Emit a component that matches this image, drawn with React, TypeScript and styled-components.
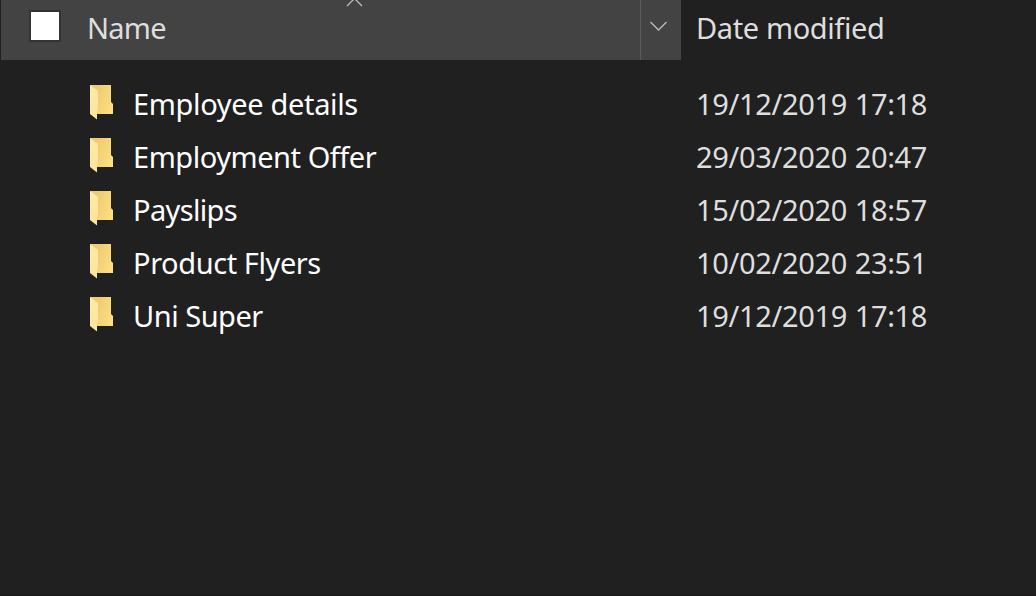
import React from 'react';
import styled, { createGlobalStyle } from 'styled-components';

const GlobalStyle = createGlobalStyle`
  * { box-sizing: border-box; }
  body {
    margin: 0;
    background: #202020;
    overflow: hidden;
  }
`;

const Explorer = styled.main`
  height: 596px;
  background: #202020;
  border-bottom: 1px solid #1a1719;
  font-family: 'Noto Sans', 'Open Sans', sans-serif;
  font-size: 29px;
  line-height: 40px;
  color: #dedede;
`;

const Header = styled.header`
  display: flex;
  height: 60px;
  padding-left: 1px;
`;

const NameColumn = styled.div`
  position: relative;
  display: flex;
  width: 639px;
  padding: 8px 0 0 29px;
  background: #434343;
`;

const Checkbox = styled.span`
  width: 32px;
  height: 32px;
  margin: 2px 26px 0 -1px;
  border: 2px solid #333333;
  background: #ffffff;
`;

const SortArrow = styled.svg`
  position: absolute;
  top: 0;
  left: 345px;
`;

const FilterButton = styled.div`
  display: flex;
  align-items: flex-start;
  width: 41px;
  padding: 20px 0 0 8px;
  border-left: 1px solid #5c5c5c;
  background: #434343;
`;

const DateColumn = styled.div`
  padding: 8px 0 0 15px;
`;

const Label = styled.span<{ $spacing: number }>`
  letter-spacing: ${({ $spacing }) => $spacing}px;
  white-space: pre;
`;

const List = styled.section`
  padding-top: 18px;
`;

const Row = styled.div`
  display: grid;
  grid-template-columns: 44px 563px auto;
  height: 53px;
  padding: 6px 0 0 89px;
`;

const FileName = styled(Label)`
  color: #ffffff;
`;

const FileDate = styled(Label)`
  word-spacing: 0.6px;
`;

const FolderSvg = styled.svg`
  display: block;
  margin-top: 1px;
`;

function FolderIcon() {
  return (
    <FolderSvg width="26" height="36" viewBox="0 0 26 36">
      <defs>
        <linearGradient id="back" x1="0.25" y1="0.45" x2="1" y2="0.75">
          <stop offset="0" stopColor="#efcc72" />
          <stop offset="1" stopColor="#ffdf82" />
        </linearGradient>
        <linearGradient id="flap" x1="0" y1="0" x2="0.3" y2="1">
          <stop offset="0" stopColor="#ffebab" />
          <stop offset="1" stopColor="#fee49c" />
        </linearGradient>
      </defs>
      <path d="M1 0H22V17L24 19V29H1Z" fill="url(#back)" />
      <path d="M1 0L9 6V24L8 27V34.5L1 29Z" fill="url(#flap)" />
    </FolderSvg>
  );
}

const files = [
  { name: 'Employee details', date: '19/12/2019 17:18', spacing: -0.34 },
  { name: 'Employment Offer', date: '29/03/2020 20:47', spacing: -0.46 },
  { name: 'Payslips', date: '15/02/2020 18:57', spacing: -0.65 },
  { name: 'Product Flyers', date: '10/02/2020 23:51', spacing: -0.42 },
  { name: 'Uni Super', date: '19/12/2019 17:18', spacing: -0.48 },
];

export default function App() {
  return (
    <>
      <GlobalStyle />
      <Explorer>
        <Header>
          <NameColumn>
            <Checkbox />
            <Label $spacing={-0.75}>Name</Label>
            <SortArrow width="18" height="7" viewBox="0 0 18 7">
              <path d="M1 6L8.5 -1.5L16 6" fill="none" stroke="#bdbdbd" strokeWidth="1.3" />
            </SortArrow>
          </NameColumn>
          <FilterButton>
            <svg width="20" height="13" viewBox="0 0 20 13">
              <path d="M1.5 2L9.5 10L17.5 2" fill="none" stroke="#bdbdbd" strokeWidth="1.3" />
            </svg>
          </FilterButton>
          <DateColumn>
            <Label $spacing={-0.38}>Date modified</Label>
          </DateColumn>
        </Header>
        <List>
          {files.map((file) => (
            <Row key={file.name}>
              <FolderIcon />
              <FileName $spacing={file.spacing}>{file.name}</FileName>
              <FileDate $spacing={-0.34}>{file.date}</FileDate>
            </Row>
          ))}
        </List>
      </Explorer>
    </>
  );
}
